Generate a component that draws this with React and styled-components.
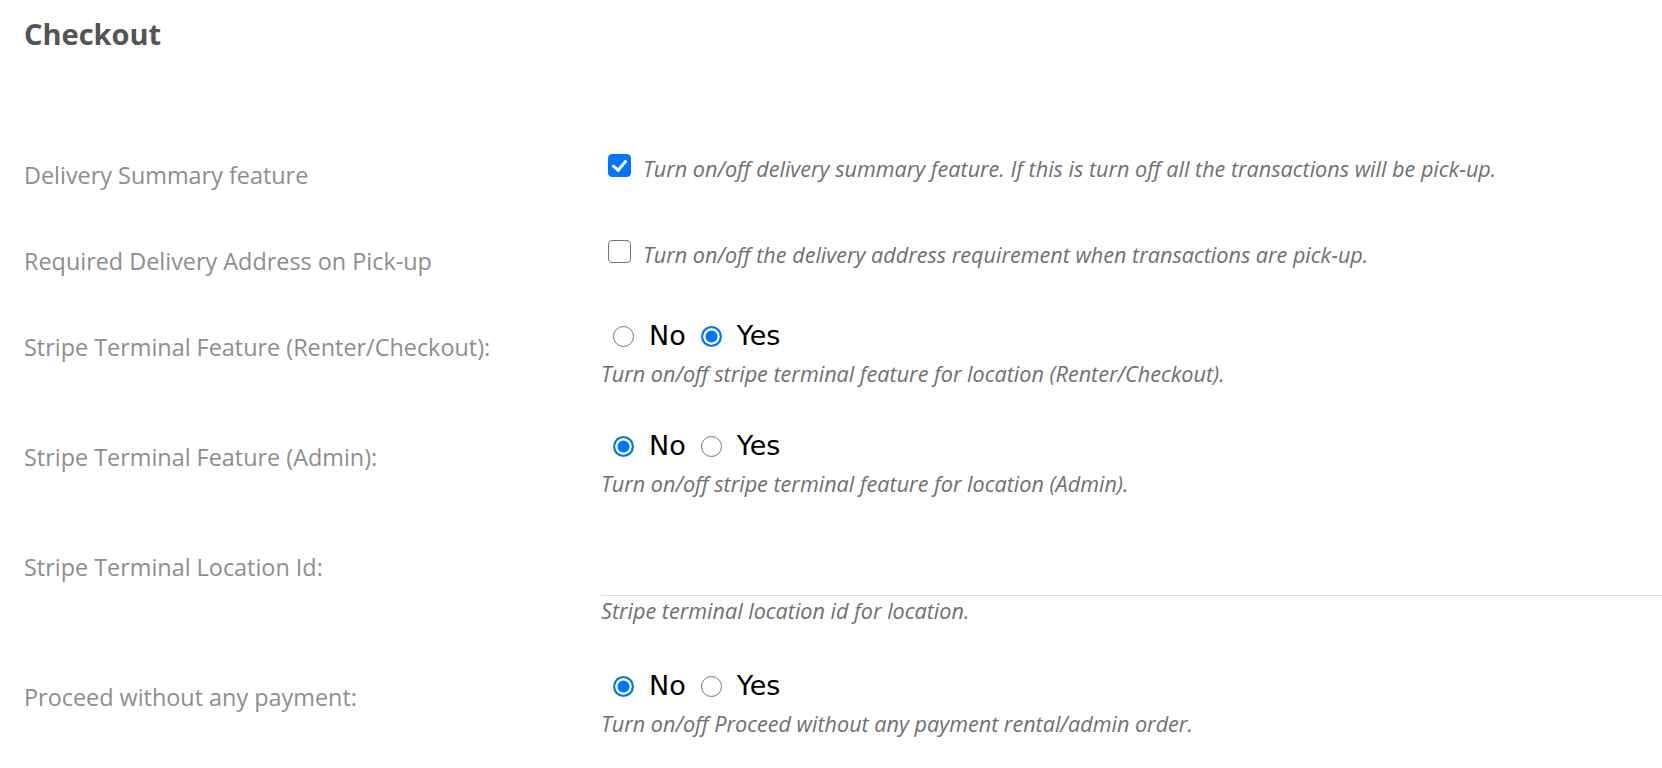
import React from "react";
import styled, { createGlobalStyle } from "styled-components";

const GlobalStyle = createGlobalStyle`
  html, body {
    margin: 0;
    padding: 0;
    background: #ffffff;
  }
  body {
    font-family: "Open Sans", "Liberation Sans", sans-serif;
  }
  * { box-sizing: border-box; }
`;

const Page = styled.div`
  padding: 17px 0 0 24px;
  overflow: hidden;
`;

const Heading = styled.h2`
  margin: 0 0 97px 0;
  font-family: "Open Sans", sans-serif;
  font-weight: 700;
  font-size: 29px;
  line-height: 34px;
  color: #545454;
`;

const Form = styled.div`
  display: flex;
  flex-direction: column;
  gap: 41px;
`;

const Row = styled.div`
  display: grid;
  grid-template-columns: 577px 1fr;
  align-items: start;
`;

const Label = styled.div`
  padding-top: 9px;
  font-family: "Open Sans", sans-serif;
  font-size: 23.4px;
  line-height: 36px;
  color: #8e8e8e;
`;

const Field = styled.div`
  display: flex;
  flex-direction: column;
  margin-top: ${(p) => p.$top || 0}px;
  padding-bottom: ${(p) => p.$bottom || 0}px;
`;

const CheckLine = styled.label`
  display: flex;
  align-items: flex-start;
`;

const Checkbox = styled.input.attrs({ type: "checkbox" })`
  appearance: none;
  -webkit-appearance: none;
  flex: none;
  width: 23px;
  height: 23px;
  margin: 0 12px 0 7px;
  border-radius: 4px;
  border: 1.5px solid #767676;
  background: #ffffff;
  position: relative;

  &:checked {
    border-color: #0075ff;
    background: #0075ff;
  }
  &:checked::after {
    content: "";
    position: absolute;
    left: 6px;
    top: 2px;
    width: 6px;
    height: 11px;
    border: solid #ffffff;
    border-width: 0 3px 3px 0;
    transform: rotate(40deg);
  }
`;

const Help = styled.div`
  font-family: "Open Sans", sans-serif;
  font-style: italic;
  font-size: 21.6px;
  line-height: 30px;
  color: #707070;
`;

const RadioGroup = styled.div`
  display: flex;
  align-items: center;
  gap: 3px;
  height: 36px;
  margin-bottom: 5px;
`;

const Option = styled.label`
  display: inline-flex;
  align-items: center;
  font-family: "DejaVu Sans", "Liberation Sans", sans-serif;
  font-size: 27px;
  line-height: 36px;
  color: #000000;
`;

const Radio = styled.input.attrs({ type: "radio" })`
  appearance: none;
  -webkit-appearance: none;
  flex: none;
  width: 21px;
  height: 21px;
  margin: 0 15px 0 12px;
  border-radius: 50%;
  border: 1.5px solid #767676;
  background: #ffffff;

  &:checked {
    border: 2px solid #0075ff;
    background: #0075ff;
    box-shadow: inset 0 0 0 2.5px #ffffff;
  }
`;

const TextInput = styled.input`
  display: block;
  width: 100%;
  height: 56px;
  border: none;
  border-bottom: 1px solid #dcdcdc;
  background: transparent;
  outline: none;
  font-family: "Open Sans", sans-serif;
  font-size: 21px;
  padding: 0;
`;

function RadioField({ name, value, help }) {
  return (
    <Field $top={-2}>
      <RadioGroup>
        <Option>
          <Radio name={name} defaultChecked={value === "no"} />
          No
        </Option>
        <Option>
          <Radio name={name} defaultChecked={value === "yes"} />
          Yes
        </Option>
      </RadioGroup>
      <Help>{help}</Help>
    </Field>
  );
}

export default function App() {
  return (
    <>
      <GlobalStyle />
      <Page>
        <Heading>Checkout</Heading>
        <Form>
          <Row>
            <Label>Delivery Summary feature</Label>
            <Field $top={6}>
              <CheckLine>
                <Checkbox defaultChecked />
                <Help>
                  Turn on/off delivery summary feature. If this is turn off all the transactions will be pick-up.
                </Help>
              </CheckLine>
            </Field>
          </Row>
          <Row>
            <Label>Required Delivery Address on Pick-up</Label>
            <Field $top={6}>
              <CheckLine>
                <Checkbox />
                <Help>
                  Turn on/off the delivery address requirement when transactions are pick-up.
                </Help>
              </CheckLine>
            </Field>
          </Row>
          <Row>
            <Label>Stripe Terminal Feature (Renter/Checkout):</Label>
            <RadioField
              name="terminal-renter"
              value="yes"
              help="Turn on/off stripe terminal feature for location (Renter/Checkout)."
            />
          </Row>
          <Row>
            <Label>Stripe Terminal Feature (Admin):</Label>
            <RadioField
              name="terminal-admin"
              value="no"
              help="Turn on/off stripe terminal feature for location (Admin)."
            />
          </Row>
          <Row>
            <Label>Stripe Terminal Location Id:</Label>
            <Field $bottom={3}>
              <TextInput type="text" />
              <Help>Stripe terminal location id for location.</Help>
            </Field>
          </Row>
          <Row>
            <Label>Proceed without any payment:</Label>
            <RadioField
              name="no-payment"
              value="no"
              help="Turn on/off Proceed without any payment rental/admin order."
            />
          </Row>
        </Form>
      </Page>
    </>
  );
}
